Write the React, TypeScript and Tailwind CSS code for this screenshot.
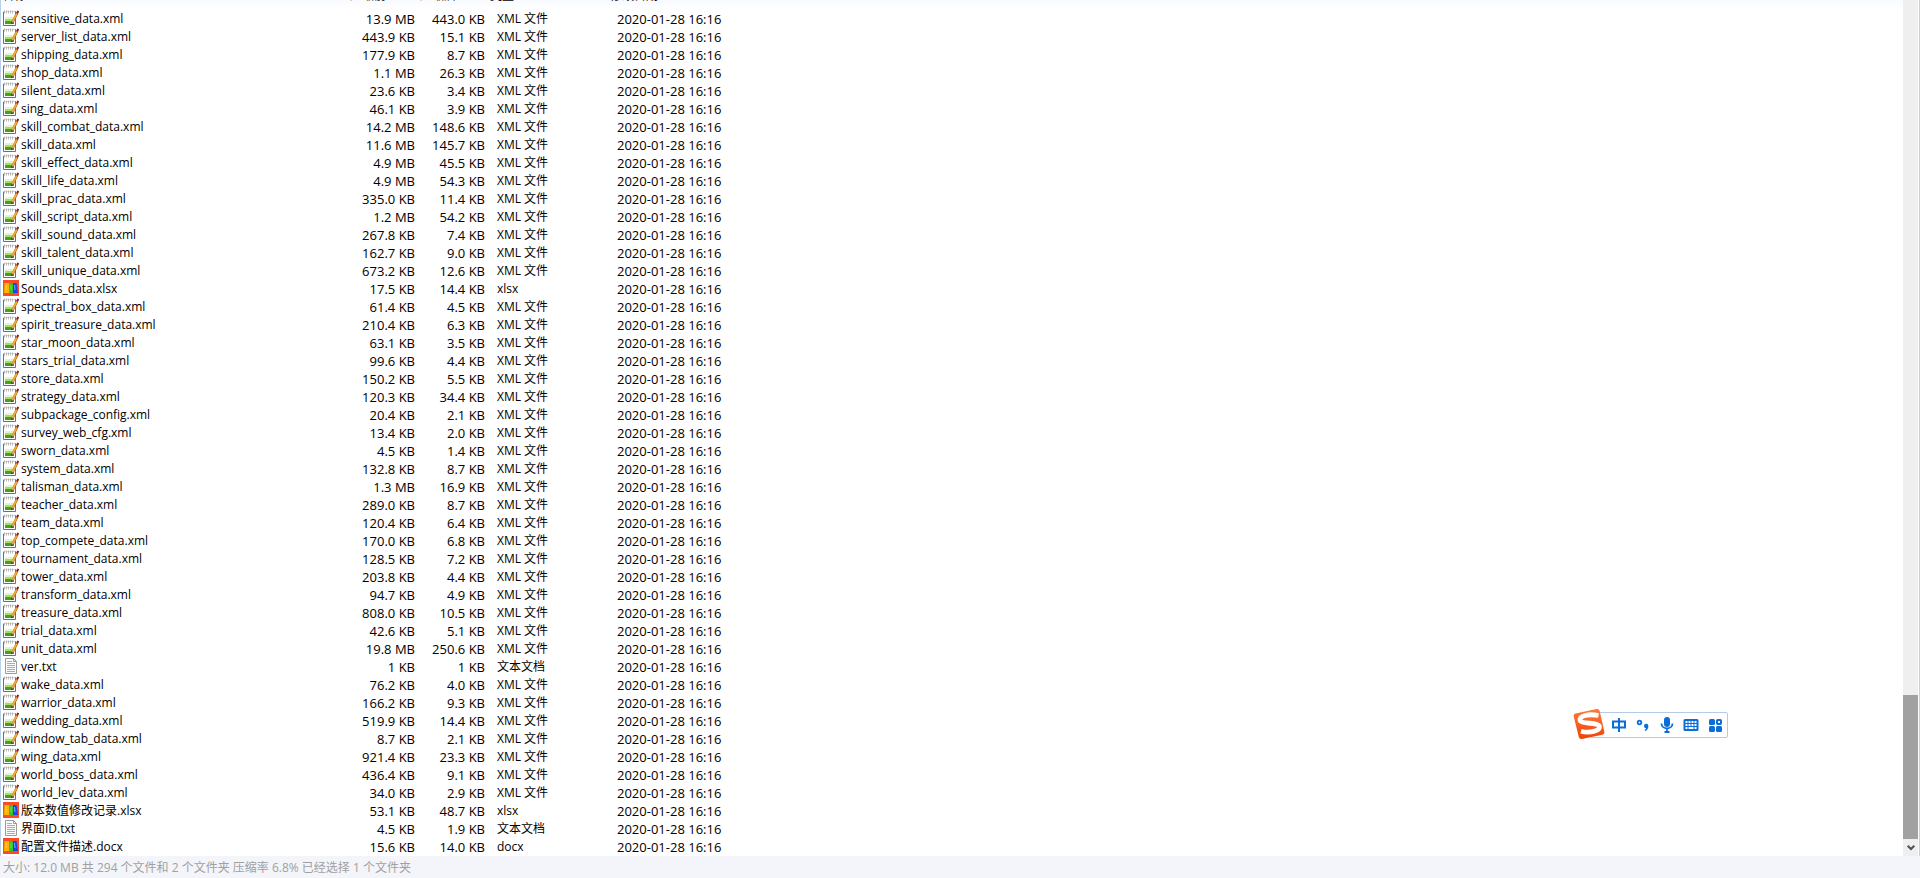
type Row = [name: string, size: string, packed: string];

const files: Row[] = [
  ['sensitive_data.xml', '13.9 MB', '443.0 KB'],
  ['server_list_data.xml', '443.9 KB', '15.1 KB'],
  ['shipping_data.xml', '177.9 KB', '8.7 KB'],
  ['shop_data.xml', '1.1 MB', '26.3 KB'],
  ['silent_data.xml', '23.6 KB', '3.4 KB'],
  ['sing_data.xml', '46.1 KB', '3.9 KB'],
  ['skill_combat_data.xml', '14.2 MB', '148.6 KB'],
  ['skill_data.xml', '11.6 MB', '145.7 KB'],
  ['skill_effect_data.xml', '4.9 MB', '45.5 KB'],
  ['skill_life_data.xml', '4.9 MB', '54.3 KB'],
  ['skill_prac_data.xml', '335.0 KB', '11.4 KB'],
  ['skill_script_data.xml', '1.2 MB', '54.2 KB'],
  ['skill_sound_data.xml', '267.8 KB', '7.4 KB'],
  ['skill_talent_data.xml', '162.7 KB', '9.0 KB'],
  ['skill_unique_data.xml', '673.2 KB', '12.6 KB'],
  ['Sounds_data.xlsx', '17.5 KB', '14.4 KB'],
  ['spectral_box_data.xml', '61.4 KB', '4.5 KB'],
  ['spirit_treasure_data.xml', '210.4 KB', '6.3 KB'],
  ['star_moon_data.xml', '63.1 KB', '3.5 KB'],
  ['stars_trial_data.xml', '99.6 KB', '4.4 KB'],
  ['store_data.xml', '150.2 KB', '5.5 KB'],
  ['strategy_data.xml', '120.3 KB', '34.4 KB'],
  ['subpackage_config.xml', '20.4 KB', '2.1 KB'],
  ['survey_web_cfg.xml', '13.4 KB', '2.0 KB'],
  ['sworn_data.xml', '4.5 KB', '1.4 KB'],
  ['system_data.xml', '132.8 KB', '8.7 KB'],
  ['talisman_data.xml', '1.3 MB', '16.9 KB'],
  ['teacher_data.xml', '289.0 KB', '8.7 KB'],
  ['team_data.xml', '120.4 KB', '6.4 KB'],
  ['top_compete_data.xml', '170.0 KB', '6.8 KB'],
  ['tournament_data.xml', '128.5 KB', '7.2 KB'],
  ['tower_data.xml', '203.8 KB', '4.4 KB'],
  ['transform_data.xml', '94.7 KB', '4.9 KB'],
  ['treasure_data.xml', '808.0 KB', '10.5 KB'],
  ['trial_data.xml', '42.6 KB', '5.1 KB'],
  ['unit_data.xml', '19.8 MB', '250.6 KB'],
  ['ver.txt', '1 KB', '1 KB'],
  ['wake_data.xml', '76.2 KB', '4.0 KB'],
  ['warrior_data.xml', '166.2 KB', '9.3 KB'],
  ['wedding_data.xml', '519.9 KB', '14.4 KB'],
  ['window_tab_data.xml', '8.7 KB', '2.1 KB'],
  ['wing_data.xml', '921.4 KB', '23.3 KB'],
  ['world_boss_data.xml', '436.4 KB', '9.1 KB'],
  ['world_lev_data.xml', '34.0 KB', '2.9 KB'],
  ['版本数值修改记录.xlsx', '53.1 KB', '48.7 KB'],
  ['界面ID.txt', '4.5 KB', '1.9 KB'],
  ['配置文件描述.docx', '15.6 KB', '14.0 KB'],
];

const kinds: Record<string, string> = { xml: 'XML 文件', txt: '文本文档', xlsx: 'xlsx', docx: 'docx' };

function XmlIcon() {
  return (
    <svg viewBox="0 0 16 16" className="size-4 shrink-0" aria-hidden="true">
      <path d="M.5 1.5h12v14H.5z" fill="#fff" stroke="#6c7074" />
      <path d="M0 1.500h12" stroke="#d8d8d8" />
      <path d="M1.500.5v3M3.500.5v3M5.500.5v3M7.500.5v3M9.500.5v3" stroke="#a9a9a9" strokeWidth=".8" />
      <path d="M2 7h9v2H2z" fill="#e4f3c8" />
      <path d="M2 9h9v2H2z" fill="#a5dc62" />
      <path d="M2 11h9v3H2z" fill="#459f24" />
      <path d="M9.300 12.600 14 3.500" stroke="#a8641a" strokeWidth="2.400" />
      <path d="M9.500 11.800 13.800 3.500" stroke="#f9b233" strokeWidth="1.600" />
      <path d="m8.200 14.200.2-2.200 1.700.9z" fill="#4a3414" />
      <path d="M14 3.500 15.200.8" stroke="#8c1c20" strokeWidth="2" />
    </svg>
  );
}

function TextIcon() {
  return (
    <svg viewBox="0 0 16 16" className="size-4 shrink-0" aria-hidden="true">
      <path d="M2.500.5h8l3 3v12h-11z" fill="#fafafa" stroke="#9a9a9a" />
      <path d="M10.500.5v3h3" fill="none" stroke="#9a9a9a" />
      <path d="M4 3.500h5M4 5.500h8M4 7.500h8M4 9.500h8M4 11.500h8M4 13.500h8" stroke="#a8adb3" />
    </svg>
  );
}

function ArchiveIcon() {
  return (
    <svg viewBox="0 0 16 16" className="size-4 shrink-0" aria-hidden="true">
      <path d="M0 0h16v16H0z" fill="#fb4a28" />
      <path d="M1.500 3H6v10H1z" fill="#ffb400" />
      <path d="M6 3h4v10H6z" fill="#35c41d" />
      <path d="M10 3h3.500L15 13h-5z" fill="#1846e8" />
      <path d="M3 5v5M8 5v5" stroke="#fff" strokeOpacity=".35" />
      <path d="m11.500 5 .5 5" stroke="#6fb0ff" />
    </svg>
  );
}

function FileIcon({ ext }: { ext: string }) {
  if (ext === 'xml') return <XmlIcon />;
  if (ext === 'txt') return <TextIcon />;
  return <ArchiveIcon />;
}

function Heading({ label }: { label: string }) {
  return (
    <th scope="col" className="p-0 text-left font-normal">
      <div className="flex h-[10px] items-end overflow-hidden pb-[5px] pl-px">
        <span>{label}</span>
      </div>
    </th>
  );
}

function FileTable() {
  return (
    <table className="w-[740px] table-fixed border-collapse whitespace-nowrap text-[12px] leading-[18px] text-black">
      <colgroup>
        <col className="w-[348px]" />
        <col className="w-[70px]" />
        <col className="w-[70px]" />
        <col className="w-[120px]" />
        <col />
      </colgroup>
      <thead>
        <tr>
          <Heading label="名称" />
          <Heading label="压缩前" />
          <Heading label="压缩后" />
          <Heading label="类型" />
          <Heading label="修改日期" />
        </tr>
      </thead>
      <tbody>
        {files.map(([name, size, packed]) => {
          const ext = name.split('.')[1];
          return (
            <tr key={name} className="h-[18px]">
              <td className="p-0">
                <div className="flex h-[18px] items-start pl-0.5">
                  <FileIcon ext={ext} />
                  <span className="pl-0.5">{name}</span>
                </div>
              </td>
              <td className="py-0 pr-1 text-right text-[13px]">{size}</td>
              <td className="py-0 pr-1 text-right text-[13px]">{packed}</td>
              <td className="py-0 pl-2">{kinds[ext]}</td>
              <td className="py-0 pl-2 text-[13px]">2020-01-28 16:16</td>
            </tr>
          );
        })}
      </tbody>
    </table>
  );
}

function InputBar() {
  const button = 'flex size-6 items-center justify-center text-[#0a6ed8]';
  return (
    <div className="absolute right-48 bottom-[137px] flex h-8 w-[154px] items-center">
      <div className="ml-4 flex h-[26px] flex-1 items-center justify-end rounded-xs border border-[#b4cbe5] bg-white">
        <button type="button" aria-label="中文" className={button}>
          <svg viewBox="0 0 16 16" className="size-4" fill="none" stroke="currentColor" strokeWidth="2">
            <path d="M2 4.500h12v6H2zM8 1v14" />
          </svg>
        </button>
        <button type="button" aria-label="标点" className={button}>
          <svg viewBox="0 0 16 16" className="size-4">
            <circle cx="4.500" cy="5.500" r="1.800" fill="none" stroke="currentColor" strokeWidth="1.800" />
            <path d="M9 9a2.200 2.200 0 1 1 4.400 0c0 2.400-1 4-3.200 5l-.7-.9c1-.6 1.500-1.200 1.600-2C9.700 11 9 10.200 9 9z" fill="currentColor" />
          </svg>
        </button>
        <button type="button" aria-label="语音" className={button}>
          <svg viewBox="0 0 16 16" className="size-4" fill="none" stroke="currentColor" strokeWidth="1.800">
            <rect x="5" y="0" width="6" height="10" rx="3" fill="currentColor" stroke="none" />
            <path d="M2.500 6.500c0 6.500 11 6.500 11 0M8 11.500V15M5.500 15h5" />
          </svg>
        </button>
        <button type="button" aria-label="键盘" className={button}>
          <svg viewBox="0 0 16 16" className="size-4">
            <rect x=".5" y="2" width="15" height="12" rx="1.500" fill="currentColor" />
            <path d="M2.500 4h2v2h-2zm3 0h2v2h-2zm3 0h2v2h-2zm3 0h2v2h-2zm-9 3h2v2h-2zm3 0h2v2h-2zm3 0h2v2h-2zm3 0h2v2h-2zm-9 3h2v2h-2zm3 0h5v2h-5zm6 0h2v2h-2z" fill="#fff" />
          </svg>
        </button>
        <button type="button" aria-label="工具箱" className={button}>
          <svg viewBox="0 0 16 16" className="size-4" fill="currentColor">
            <rect x="2" y="2" width="6" height="6" rx="1.500" />
            <rect x="10" y="3" width="4" height="4" rx=".8" fill="none" stroke="currentColor" strokeWidth="2" />
            <rect x="2" y="9" width="6" height="6" rx="1.500" />
            <rect x="9" y="9" width="6" height="6" rx="1.500" />
          </svg>
        </button>
      </div>
      <svg viewBox="0 0 32 32" className="absolute -top-px -left-px size-8" aria-hidden="true">
        <defs>
          <linearGradient id="badge" x1="0" y1="0" x2="0" y2="1">
            <stop offset="0" stopColor="#ff7a3d" />
            <stop offset="1" stopColor="#ee4408" />
          </linearGradient>
        </defs>
        <path d="M2.500 5.500 23.500 1q2.500-.5 3.200 2l4.600 20.500q.5 2.500-2 3.200L9 31q-2.500.5-3.200-2L.7 8.500q-.5-2.400 1.800-3z" fill="url(#badge)" />
        <path d="M25.500 7.500C15 5.500 6.500 8 7 12c.5 4.500 19 2 19.500 6.500.4 4.500-10 7-18.500 4.700" fill="none" stroke="#fff" strokeWidth="4.800" />
      </svg>
    </div>
  );
}

export default function App() {
  return (
    <div className="relative flex min-h-screen flex-col bg-white font-['Open_Sans','Noto_Sans_CJK_SC',sans-serif]">
      <main className="flex flex-1 border-x border-l-[#b9d1ea] border-r-[#bfd3e6]">
        <div className="min-w-0 flex-1 bg-linear-to-b from-[#f7fafe] to-white to-[9px]">
          <FileTable />
        </div>
        <div className="mr-px flex w-[15px] flex-col justify-end bg-[#efefef]">
          <div className="h-36 bg-[#a1a1a1]" />
          <button type="button" aria-label="向下滚动" className="flex h-[17px] items-center justify-center text-[#505050]">
            <svg viewBox="0 0 8 8" className="size-2" fill="none" stroke="currentColor" strokeWidth="2">
              <path d="m.7 1.700 3.300 3.300 3.300-3.300" />
            </svg>
          </button>
        </div>
      </main>
      <footer className="h-[22px] bg-[#f3f5fa] pl-[3px] text-[12px] leading-[23px] text-[#a0a0a0]">
        大小: 12.0 MB 共 294 个文件和 2 个文件夹 压缩率 6.8% 已经选择 1 个文件夹
      </footer>
      <InputBar />
    </div>
  );
}
